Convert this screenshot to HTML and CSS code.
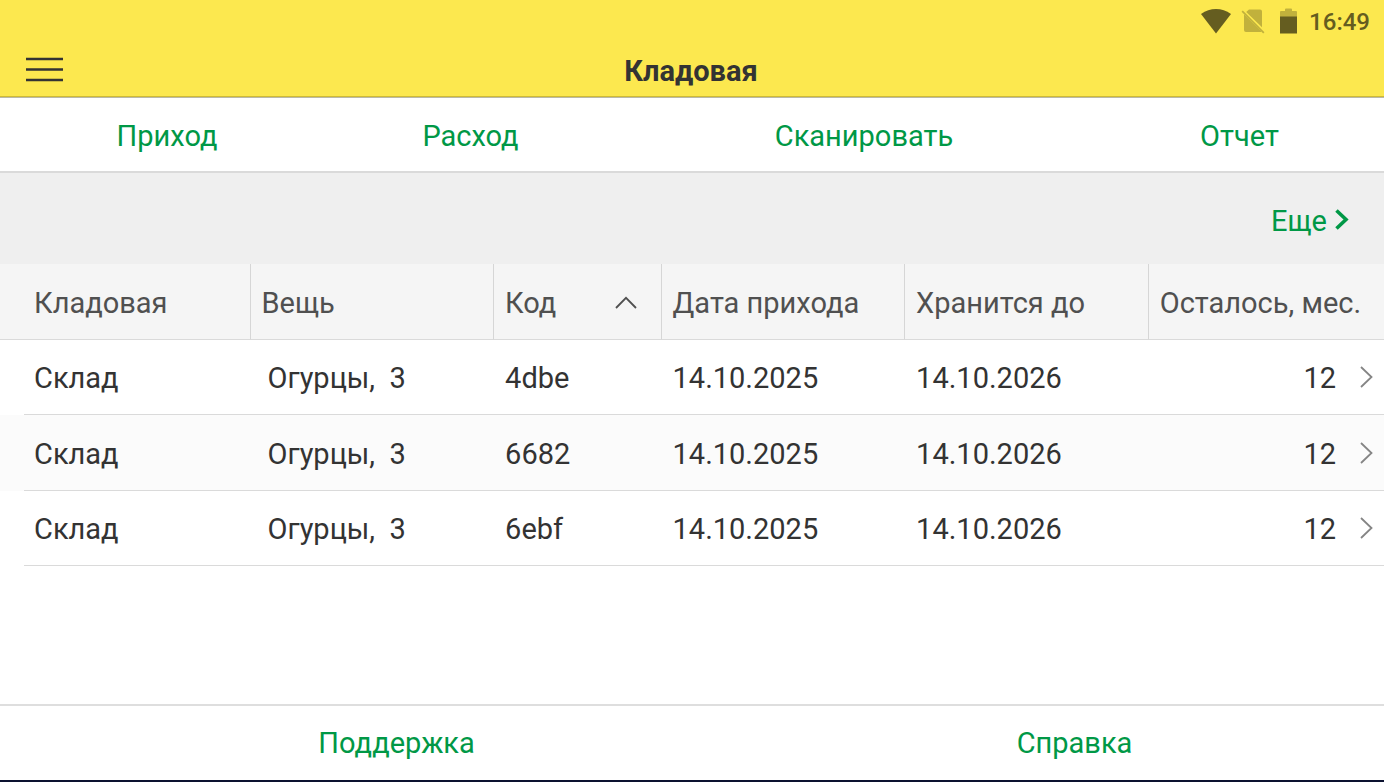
FILE: index.html
```html
<!DOCTYPE html>
<html lang="ru">
<head>
<meta charset="utf-8">
<meta name="viewport" content="width=device-width, initial-scale=1">
<title>Кладовая</title>
<link rel="stylesheet" href="styles.css">
</head>
<body>
<div class="app">
  <header class="top">
    <div class="status">
      <svg class="status-wifi" width="30" height="26" viewBox="0 0 30 26" aria-label="Wi-Fi"><path d="M0 6Q7 1 15 1T30 6L15 25.500Z"/></svg>
      <svg class="status-sim" width="24" height="26" viewBox="0 0 24 26" aria-label="Нет SIM-карты"><path d="M8 1.500H19Q21 1.500 21 3.500V19.200L5.200 3.900ZM3 6.200L20.300 23.500Q20 24 19 24H5Q3 24 3 22Z"/><path d="M1.200 3.200L22.800 24.800" fill="none" stroke="currentColor" stroke-width="1.800"/></svg>
      <svg class="status-battery" width="17" height="26" viewBox="0 0 17 26" aria-label="Батарея"><path class="battery-empty" d="M0 9V4Q0 3 1 3H5V1.500Q5 .500 6 .500H11Q12 .500 12 1.500V3H16Q17 3 17 4V9Z"/><path d="M0 8.500H17V25.500H0Z"/></svg>
      <time class="clock">16:49</time>
    </div>
    <div class="title-bar">
      <button class="menu" type="button" aria-label="Меню">
        <svg width="37" height="25" viewBox="0 0 37 25"><path d="M0 2H37M0 12.500H37M0 23H37" fill="none" stroke="currentColor" stroke-width="2.400"/></svg>
      </button>
      <h1 class="title">Кладовая</h1>
    </div>
  </header>
  <nav class="commands">
    <button class="command" type="button">Приход</button>
    <button class="command" type="button">Расход</button>
    <button class="command" type="button">Сканировать</button>
    <button class="command" type="button">Отчет</button>
  </nav>
  <main class="content">
    <div class="more-bar">
      <button class="more" type="button">Еще
        <svg width="14" height="24" viewBox="0 0 14 24"><path d="M1.500 1.500L11 10.500L1.500 19.500" fill="none" stroke="currentColor" stroke-width="3.600"/></svg>
      </button>
    </div>
    <table class="stock">
      <colgroup><col class="col-store"><col class="col-item"><col class="col-code"><col class="col-date"><col class="col-until"><col class="col-left"></colgroup>
      <thead>
        <tr>
          <th scope="col">Кладовая</th>
          <th scope="col">Вещь</th>
          <th scope="col" aria-sort="ascending"><button class="sort" type="button">Код
            <svg width="22" height="14" viewBox="0 0 22 14"><path d="M1 12L11 1.800L21 12" fill="none" stroke="currentColor" stroke-width="1.800"/></svg></button></th>
          <th scope="col">Дата прихода</th>
          <th scope="col">Хранится до</th>
          <th scope="col">Осталось, мес.</th>
        </tr>
      </thead>
      <tbody>
        <tr>
          <td>Склад</td><td class="item">Огурцы,&nbsp; 3</td><td>4dbe</td><td>14.10.2025</td><td>14.10.2026</td>
          <td><div class="left">12 <button class="open" type="button" aria-label="Открыть"><svg width="13" height="24" viewBox="0 0 13 24"><path d="M1 1L11.500 11L1 21" fill="none" stroke="currentColor" stroke-width="1.800"/></svg></button></div></td>
        </tr>
        <tr>
          <td>Склад</td><td class="item">Огурцы,&nbsp; 3</td><td>6682</td><td>14.10.2025</td><td>14.10.2026</td>
          <td><div class="left">12 <button class="open" type="button" aria-label="Открыть"><svg width="13" height="24" viewBox="0 0 13 24"><path d="M1 1L11.500 11L1 21" fill="none" stroke="currentColor" stroke-width="1.800"/></svg></button></div></td>
        </tr>
        <tr>
          <td>Склад</td><td class="item">Огурцы,&nbsp; 3</td><td>6ebf</td><td>14.10.2025</td><td>14.10.2026</td>
          <td><div class="left">12 <button class="open" type="button" aria-label="Открыть"><svg width="13" height="24" viewBox="0 0 13 24"><path d="M1 1L11.500 11L1 21" fill="none" stroke="currentColor" stroke-width="1.800"/></svg></button></div></td>
        </tr>
      </tbody>
    </table>
  </main>
  <footer class="links">
    <button class="command" type="button">Поддержка</button>
    <button class="command" type="button">Справка</button>
  </footer>
</div>
</body>
</html>
```

FILE: styles.css
```css
* {
  box-sizing: border-box;
}

body {
  margin: 0;
  background: #fff;
  color: #333;
  font-family: Roboto, "Noto Sans", sans-serif;
  font-size: 29px;
  line-height: 36px;
}

button {
  padding: 0;
  border: 0;
  background: none;
  color: inherit;
  font: inherit;
  cursor: pointer;
}

svg {
  display: block;
  flex: none;
  fill: currentColor;
}

.app {
  display: flex;
  flex-direction: column;
  min-height: 100vh;
  border-bottom: 2px solid #0c1230;
}

.top {
  background: #fce84f;
  border-bottom: 1px solid #b9b9a8;
  box-shadow: inset 0 -1px #cfba36;
}

.status {
  display: flex;
  align-items: flex-start;
  justify-content: flex-end;
  height: 44px;
  padding: 8px 14px 0 0;
  color: #655d20;
}

.status-sim {
  margin-left: 10px;
  color: #c1b13c;
}

.status-battery {
  margin: 0 12px 0 15px;
}

.battery-empty {
  fill: #c1b13c;
}

.clock {
  font-size: 24px;
  font-weight: 500;
  line-height: 28px;
}

.title-bar {
  display: grid;
  grid-template-columns: 1fr auto 1fr;
  align-items: center;
  height: 53px;
  padding: 0 28px 0 26px;
}

.menu {
  justify-self: start;
  padding-bottom: 3px;
}

.title {
  margin: 0;
  font-size: 29px;
  font-weight: 700;
}

.commands {
  display: grid;
  grid-template-columns: 282fr 325fr 462fr 289fr;
  height: 75px;
  padding: 2px 0 0 26px;
  border-bottom: 2px solid #dadada;
}

.command {
  color: #009846;
}

.more-bar {
  display: flex;
  justify-content: flex-end;
  height: 91px;
  padding: 4px 35px 0 0;
  background: #efefef;
}

.more {
  display: flex;
  align-items: center;
  gap: 8px;
  color: #009846;
}

.content {
  flex: 1;
}

.stock {
  width: 100%;
  table-layout: fixed;
  border-collapse: separate;
  border-spacing: 0;
}

.col-store { width: 18.1%; }
.col-item { width: 17.6%; }
.col-code { width: 12.1%; }
.col-date { width: 17.6%; }
.col-until { width: 17.6%; }
.col-left { width: 17%; }

.stock th,
.stock td {
  padding: 2px 11px 0;
  border-bottom: 1px solid #dadada;
  text-align: left;
  font-weight: 400;
  white-space: nowrap;
}

.stock th {
  height: 76px;
  border-right: 1px solid #d6d6d6;
  background: #f5f5f5;
  color: #505050;
}

.stock th:last-child {
  border-right: 0;
}

.stock td {
  height: 75px;
}

.stock tr:nth-child(even) td {
  height: 76px;
  background-color: #fbfbfb;
}

.stock th:first-child,
.stock td:first-child {
  padding-left: 34px;
}

.stock td:first-child {
  padding-bottom: 1px;
  border-bottom: 0;
  background-image: linear-gradient(#dadada, #dadada);
  background-position: 24px 100%;
  background-repeat: no-repeat;
  background-size: 100% 1px;
}

.stock td.item {
  padding-left: 17px;
}

.sort {
  display: flex;
  align-items: center;
  justify-content: space-between;
  width: 100%;
  padding-right: 13px;
}

.left {
  display: flex;
  align-items: center;
  justify-content: flex-end;
  gap: 24px;
}

.open {
  color: #858585;
}

.links {
  display: grid;
  grid-template-columns: 737fr 619fr;
  height: 76px;
  padding-left: 28px;
  border-top: 2px solid #dedede;
}
```
